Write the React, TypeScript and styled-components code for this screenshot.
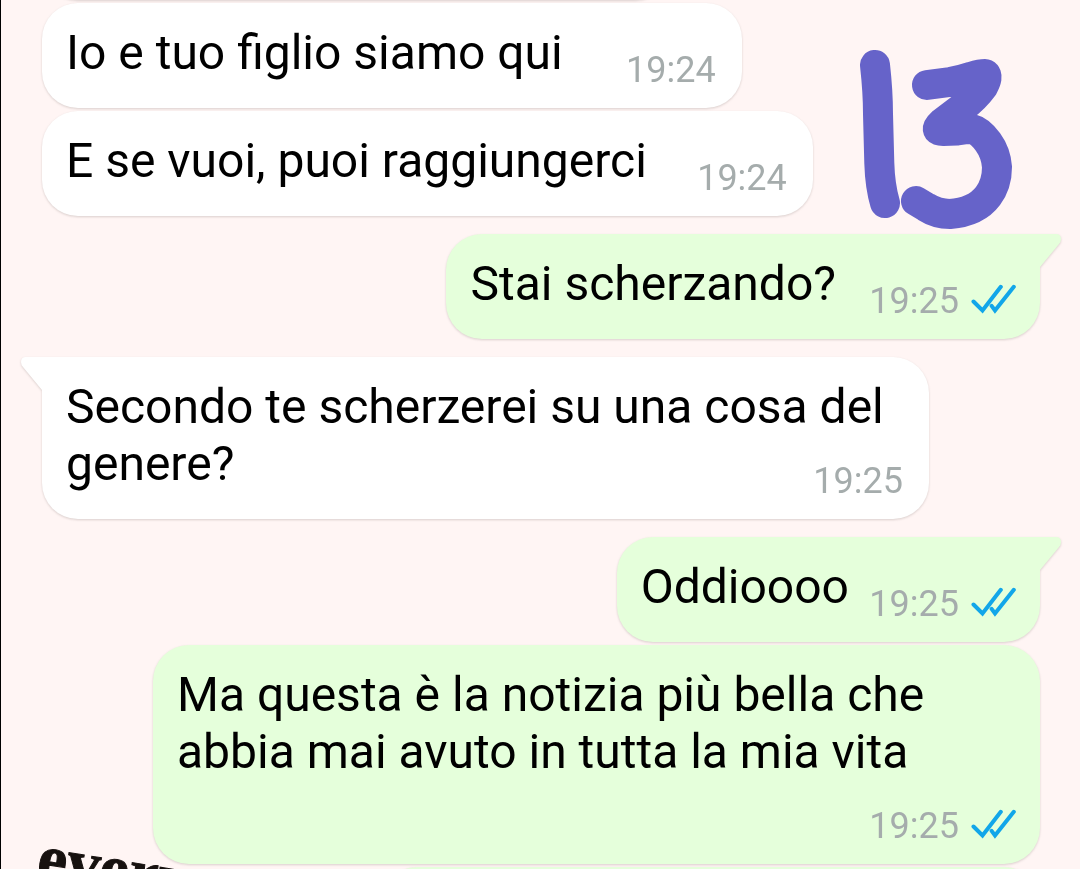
import React from "react";
import styled, { createGlobalStyle, css } from "styled-components";

type Side = "in" | "out";

interface Message {
  text: string;
  time: string;
  side: Side;
  first?: boolean;
  reserve: number;
}

const messages: Message[] = [
  { text: "Io e tuo figlio siamo qui", time: "19:24", side: "in", reserve: 153 },
  { text: "E se vuoi, puoi raggiungerci", time: "19:24", side: "in", reserve: 140 },
  { text: "Stai scherzando?", time: "19:25", side: "out", first: true, reserve: 180 },
  {
    text: "Secondo te scherzerei su una cosa del genere?",
    time: "19:25",
    side: "in",
    first: true,
    reserve: 140,
  },
  { text: "Oddioooo", time: "19:25", side: "out", first: true, reserve: 167 },
  {
    text: "Ma questa è la notizia più bella che abbia mai avuto in tutta la mia vita",
    time: "19:25",
    side: "out",
    reserve: 180,
  },
];

const fill = { in: "#ffffff", out: "#e5ffdb" };

const GlobalStyle = createGlobalStyle`
  * { box-sizing: border-box; }
  body { margin: 0; background: #fff5f4; }
`;

const Screen = styled.main`
  position: relative;
  height: 100vh;
  overflow: hidden;
  border-left: 1px solid #000;
  background: #fff5f4;
  font-family: Roboto, "Liberation Sans", sans-serif;
`;

const Thread = styled.ol`
  position: relative;
  list-style: none;
  margin: 0;
  padding: 0 40px 0 41px;
  display: flex;
  flex-direction: column;
`;

const surface = css<{ $side: Side }>`
  background: ${(p) => fill[p.$side]};
  align-self: ${(p) => (p.$side === "in" ? "flex-start" : "flex-end")};
  filter: drop-shadow(0 1px 1px rgba(70, 55, 50, 0.2));
`;

const Bubble = styled.li<{ $side: Side; $first?: boolean }>`
  ${surface}
  position: relative;
  display: grid;
  max-width: min(89%, 887px);
  margin-top: ${(p) => (p.$first ? 18 : 3)}px;
  padding: 21px ${(p) => (p.$side === "in" ? 26 : 24)}px 17px 24px;
  border-radius: 36px;
  ${(p) =>
    p.$first &&
    (p.$side === "in"
      ? "border-top-left-radius: 0;"
      : "border-top-right-radius: 0;")}
`;

const EarlierBubble = styled.li<{ $side: Side }>`
  ${surface}
  width: 63%;
  height: 36px;
  margin-top: -36px;
  border-radius: 0 0 36px 36px;
`;

const LaterBubble = styled.li<{ $side: Side }>`
  ${surface}
  width: 66%;
  height: 36px;
  margin-top: 3px;
  border-radius: 36px 36px 0 0;
`;

const Text = styled.p`
  grid-area: 1 / 1;
  margin: 0;
  padding-bottom: 10px;
  font-size: 48px;
  line-height: 57px;
  color: #000;
`;

const Reserve = styled.span<{ $width: number }>`
  display: inline-block;
  width: ${(p) => p.$width}px;
`;

const Meta = styled.div`
  grid-area: 1 / 1;
  place-self: end;
  display: flex;
  align-items: flex-start;
  gap: 12px;
  font-size: 36px;
  line-height: 42px;
  color: #a5acac;
`;

const Ticks = styled.svg`
  display: block;
  width: 45px;
  height: 30px;
  margin-top: 4px;
`;

const TailShape = styled.svg<{ $side: Side }>`
  position: absolute;
  top: 0;
  width: 24px;
  height: 36px;
  ${(p) => (p.$side === "in" ? "right: calc(100% - 2px); transform: scaleX(-1);" : "left: calc(100% - 2px);")}
`;

const Doodle = styled.svg`
  position: absolute;
  top: 46px;
  right: 64px;
  width: 156px;
  height: 186px;
`;

const Wallpaper = styled.span`
  position: absolute;
  left: 34px;
  top: 820px;
  font: bold 66px/72px "Liberation Serif", serif;
  color: #17110f;
  -webkit-text-stroke: 1px #17110f;
  transform: rotate(9deg);
  transform-origin: 0 60px;
`;

const Tail = ({ side }: { side: Side }) => (
  <TailShape $side={side} viewBox="0 0 24 36" aria-hidden="true">
    <path d="M0 0H18Q23 0 23 5Q23 8 21 10L2 33H0Z" fill={fill[side]} />
  </TailShape>
);

const ReadTicks = () => (
  <Ticks viewBox="0 0 45 30" role="img" aria-label="Letto">
    <g fill="none" stroke="#12a6e9" strokeWidth="4" strokeLinecap="round">
      <path d="M2.500 17.500L11.500 26.500L29.800 2.800" />
      <path d="M20.600 21.800L24 26.500L42.800 2.800" />
    </g>
  </Ticks>
);

export default function App() {
  return (
    <Screen>
      <GlobalStyle />
      <Wallpaper>every</Wallpaper>
      <Thread>
        <EarlierBubble $side="in" aria-hidden="true" />
        {messages.map((m) => (
          <Bubble key={m.text} $side={m.side} $first={m.first}>
            {m.first && <Tail side={m.side} />}
            <Text>
              {m.text}
              <Reserve $width={m.reserve} />
            </Text>
            <Meta>
              <time>{m.time}</time>
              {m.side === "out" && <ReadTicks />}
            </Meta>
          </Bubble>
        ))}
        <LaterBubble $side="out" aria-hidden="true" />
      </Thread>
      <Doodle viewBox="860 46 156 186" role="img" aria-label="13">
        <g
          fill="none"
          stroke="#6663c9"
          strokeWidth="30"
          strokeLinecap="round"
          strokeLinejoin="round"
        >
          <path d="M875 65Q878 92 878 114L879.3 163Q880 186 885 203" />
          <path d="M927 85L950 82Q962 80 972 76.500Q980 74 985 74Q989 76 983 87Q975 98 963 107L942 123Q933 131 943 131L957 130.500Q966 129 972 129Q980 131 988 142Q996 153 997 167Q997 184 988 196Q976 212 950 214Q937 214 926 207L916 201" />
        </g>
      </Doodle>
    </Screen>
  );
}
